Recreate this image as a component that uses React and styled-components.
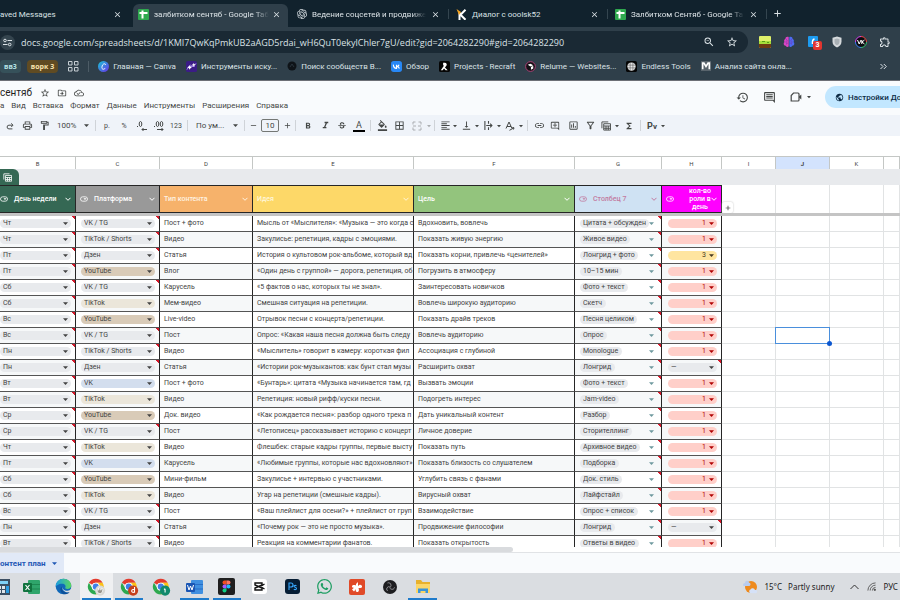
import React, { useState } from 'react'
import styled, { createGlobalStyle, css } from 'styled-components'
import {
  MdAdd,
  MdBorderAll,
  MdClose,
  MdFormatAlignLeft,
  MdFormatBold,
  MdFormatColorFill,
  MdFormatItalic,
  MdFunctions,
  MdHistory,
  MdLink,
  MdOutlineAddComment,
  MdOutlineCloudDone,
  MdOutlineComment,
  MdOutlineDriveFileMove,
  MdOutlineExtension,
  MdOutlineFilterAlt,
  MdOutlineFormatPaint,
  MdOutlineInsertChart,
  MdOutlinePrint,
  MdOutlineZoomOut,
  MdPublic,
  MdRemove,
  MdStarBorder,
  MdStrikethroughS,
  MdVerticalAlignBottom
} from 'react-icons/md'
import { FaWhatsapp } from 'react-icons/fa'
import { SiOpenai } from 'react-icons/si'

const GlobalStyle = createGlobalStyle`
  * {
    box-sizing: border-box;
  }
  body {
    margin: 0;
    background: #fff;
    font-family: Roboto, 'Liberation Sans', sans-serif;
  }
  button, input, select {
    font: inherit;
    color: inherit;
    border: 0;
    padding: 0;
    margin: 0;
    background: none;
    appearance: none;
    outline: 0;
  }
  a {
    color: inherit;
    text-decoration: none;
  }
  svg {
    display: block;
    flex: none;
  }
`

const systemFont = "'Open Sans', 'Noto Sans', sans-serif"

const Page = styled.div`
  display: flex;
  flex-direction: column;
  height: 100vh;
  overflow: hidden;
`

/* ---------- browser ---------- */

const Browser = styled.header`
  background: #2f3f4a;
  color: #dbe2e6;
  font-size: 8px;
  border-bottom: 1px solid #6d6f76;
`
const TabStrip = styled.div`
  display: flex;
  align-items: flex-end;
  height: 27px;
  background: #11222d;
`
const BrowserTab = styled.div`
  position: relative;
  display: flex;
  align-items: center;
  flex: 0 1 ${p => p.$first ? '131px' : '159px'};
  min-width: 0;
  height: 23px;
  padding: 0 9px 3px ${p => p.$first ? '0' : '7px'};
  gap: 5px;
  ${p => p.$line && css`
    &::after {
      content: '';
      position: absolute;
      right: 0;
      top: 5px;
      width: 1px;
      height: 10px;
      background: #34454f;
    }
  `}
  ${p => p.$active && css`
    &::before {
      content: '';
      position: absolute;
      z-index: 0;
      inset: 0 2px;
      border-radius: 6px 6px 0 0;
      background: #2f3f4a;
    }
  `}
`
const TabTitle = styled.button`
  position: relative;
  display: flex;
  align-items: center;
  flex: 1;
  min-width: 0;
  gap: 5px;
  text-align: left;
`
const Fade = styled.span`
  flex: 1;
  white-space: nowrap;
  mask-image: ${p => p.$fade ? 'linear-gradient(to left, transparent, #000 14px)' : 'none'};
`
const CloseButton = styled.button`
  position: relative;
  display: flex;
  justify-content: center;
  width: 9px;
`
const NewTab = styled.button`
  padding: 0 0 8px 5px;
`
const AddressRow = styled.div`
  display: flex;
  align-items: center;
  height: 30px;
  padding-right: 9px;
`
const Omnibox = styled.label`
  display: flex;
  align-items: center;
  flex: 1;
  height: 22px;
  margin-right: 11px;
  padding: 0 10px 0 0;
  gap: 11px;
  border-radius: 0 11px 11px 0;
  background: #1a2934;
`
const SiteInfo = styled.span`
  display: flex;
  align-items: center;
  justify-content: center;
  width: 15px;
  height: 15px;
  border-radius: 8px;
  background: #34444e;
`
const UrlInput = styled.input`
  flex: 1;
  min-width: 0;
  margin-left: -5px;
  font-family: ${systemFont};
  font-size: 9px;
`
const Extensions = styled.div`
  display: flex;
  gap: 12px;
`
const ExtensionButton = styled.button`
  position: relative;
  width: 12px;
  height: 12px;
`
const Badge = styled.span`
  position: absolute;
  left: 6px;
  top: 5px;
  width: 9px;
  height: 9px;
  border-radius: 2px;
  background: #e2352f;
  color: #fff;
  font-size: 7px;
  line-height: 9px;
  font-weight: 700;
`
const Bookmarks = styled.nav`
  display: flex;
  align-items: center;
  height: 23px;
  padding-bottom: 5px;
  white-space: nowrap;
  overflow: hidden;
`
const GroupChip = styled.button`
  height: 13px;
  padding: 0 4px;
  margin-right: 6px;
  border-radius: 4px;
  font-family: ${systemFont};
  font-weight: 700;
  font-size: 7px;
  background: ${p => p.$bg};
  color: ${p => p.$color};
`
const AllTabs = styled.button`
  margin-left: 4px;
`
const BookmarkLine = styled.span`
  width: 1px;
  height: 11px;
  margin: 0 9px;
  background: #4d5c66;
`
const Bookmark = styled.a`
  display: flex;
  align-items: center;
  gap: 4px;
  margin-right: 10px;
`
const MoreBookmarks = styled.button`
  margin-left: auto;
  margin-right: 13px;
`

/* ---------- document header ---------- */

const DocHeader = styled.div`
  display: flex;
  align-items: flex-start;
  height: 34px;
  background: #f9fbfd;
  color: #444746;
`
const DocInfo = styled.div`
  flex: 1;
`
const TitleRow = styled.div`
  display: flex;
  align-items: center;
  height: 18px;
  padding-top: 6px;
  gap: 7px;
`
const DocTitle = styled.h1`
  margin: 0 1px 0 0;
  font-size: 10px;
  line-height: 12px;
  font-weight: 400;
  color: #1f1f1f;
`
const MenuBar = styled.nav`
  display: flex;
  gap: 7px;
  font-size: 8px;
  line-height: 14px;
`
const HeaderActions = styled.div`
  display: flex;
  align-items: center;
  height: 22px;
  margin-top: 5px;
  gap: 14px;
`
const VideoButton = styled.button`
  display: flex;
  align-items: center;
  gap: 5px;
`
const ShareButton = styled.button`
  display: flex;
  align-items: center;
  gap: 4px;
  width: 75px;
  height: 22px;
  padding-left: 10px;
  border-radius: 11px 0 0 11px;
  overflow: hidden;
  background: #c2e7ff;
  color: #0b2a45;
  font-size: 8px;
  font-weight: 500;
  white-space: nowrap;
`

/* ---------- formatting toolbar ---------- */

const Toolbar = styled.div`
  display: flex;
  align-items: center;
  height: 21px;
  padding-left: 2px;
  background: #eff3f9;
  color: #444746;
  font-size: 7px;
`
const Tool = styled.button`
  display: flex;
  align-items: center;
  justify-content: center;
  width: ${p => p.$w || 18}px;
  height: 16px;
  opacity: ${p => p.$faint ? 0.4 : 1};
`
const ToolLine = styled.span`
  width: 1px;
  height: 11px;
  margin: 0 ${p => p.$wide ? 4 : 3}px 0 ${p => p.$wide ? 3 : 2}px;
  background: #cfd3d8;
`
const ToolSelect = styled.label`
  display: flex;
  align-items: center;
  justify-content: space-between;
  width: ${p => p.$w}px;
  padding: 0 4px 0 5px;
  font-size: 8px;
`
const SizeInput = styled.input`
  width: 18px;
  height: 13px;
  margin: 0 3px;
  border: 1px solid #747775;
  border-radius: 2px;
  text-align: center;
  font-size: 8px;
`
const TextColor = styled.span`
  width: 12px;
  border-bottom: 2px solid #000;
  font-size: 9px;
  line-height: 10px;
`
const Smart = styled.b`
  font-size: 9px;
  small {
    font-size: 8px;
  }
`
const FormulaBar = styled.div`
  height: 20px;
`

/* ---------- sheet ---------- */

const SheetArea = styled.main`
  flex: 1;
  min-height: 0;
  overflow: hidden;
`
const SheetTable = styled.table`
  width: 100%;
  table-layout: fixed;
  border-collapse: separate;
  border-spacing: 0;
  font-size: 7px;
  line-height: 9px;
  color: #434343;
`
const Letter = styled.th`
  height: 13px;
  padding: 0;
  border: solid #c4c7c5;
  border-width: 1px 1px 0 0;
  font-weight: ${p => p.$on ? 700 : 400};
  font-size: 6px;
  background: ${p => p.$on ? '#d3e3fd' : '#fff'};
`
const Band = styled.td`
  height: 16px;
  padding: 0;
  background: #e8eaed;
`
const TableTab = styled.button`
  display: flex;
  align-items: center;
  justify-content: center;
  width: 19px;
  height: 16px;
  padding-right: 4px;
  border-radius: 0 6px 0 0;
  background: #356854;
  color: #fff;
`
const HeadCell = styled.th`
  height: 28px;
  padding: 0 4px;
  &:first-child {
    padding-left: 0;
  }
  border: solid #262626;
  border-width: 1px 1px 1px 0;
  background: ${p => p.$bg};
  color: ${p => p.$color || '#fff'};
  font-weight: 500;
  line-height: ${p => p.$tall ? 8 : 9}px;
`
const HeadInner = styled.div`
  display: flex;
  align-items: center;
  gap: 6px;
  text-align: ${p => p.$center ? 'center' : 'left'};
  span {
    flex: 1;
    white-space: ${p => p.$center ? 'normal' : 'nowrap'};
    ${p => p.$center && 'padding-left: 6px; margin-right: -9px;'}
  }
`
const BlankHead = styled.td`
  position: relative;
  border-right: 1px solid #e1e3e4;
`
const AddColumn = styled.button`
  position: absolute;
  left: 0;
  bottom: 0;
  display: flex;
  align-items: center;
  justify-content: center;
  width: 11px;
  height: 11px;
  border-radius: 2px;
  background: #fff;
  color: #222;
  box-shadow: 0 0 2px #bbb;
`
const FreezeLine = styled.td`
  height: 3px;
  padding: 0;
  background: #c4c4c4;
`
const Row = styled.tr`
  height: 16px;
  background: ${p => p.$odd ? '#f6f8f9' : '#fff'};
`
const Cell = styled.td`
  height: 16px;
  padding: 0 4px;
  overflow: hidden;
  white-space: nowrap;
  border-right: 1px solid #262626;
  border-bottom: 1px solid #555;
  ${p => p.$flag && css`
    background: linear-gradient(to bottom left, #d5182a 50%, transparent 50%) top right / 4px 3px no-repeat;
  `}
`
const BlankCell = styled.td`
  height: 16px;
  padding: 0;
  background: #fff;
  border-right: 1px solid #e1e3e4;
  border-bottom: 1px solid #e1e3e4;
  ${p => p.$selected && css`
    position: relative;
    z-index: 1;
    &::before {
      content: '';
      position: absolute;
      inset: -1px;
      border: 1px solid #4a8fdc;
    }
    &::after {
      content: '';
      position: absolute;
      right: -3px;
      bottom: -3px;
      width: 5px;
      height: 5px;
      border-radius: 3px;
      background: #0b57d0;
    }
  `}
`
const Chip = styled.label`
  display: flex;
  align-items: center;
  justify-content: space-between;
  height: 9px;
  margin-left: ${p => p.$left}px;
  padding: 0 3px;
  border-radius: 5px;
  background: ${p => p.$bg};
  color: ${p => p.$color};
  select {
    flex: ${p => p.$hug ? '0 1 auto' : '1'};
    min-width: 0;
    height: 9px;
    line-height: 9px;
    text-align-last: ${p => p.$right ? 'right' : 'left'};
    ${p => p.$right && 'padding-right: 3px;'}
    ${p => p.$hug && css`
      max-width: 72px;
      margin-left: -3px;
      padding: 0 3px;
      border-radius: 5px;
      background: #e8eaed;
    `}
  }
`

/* ---------- bottom bars ---------- */

const ScrollTrack = styled.div`
  height: 6px;
  background: #fff;
  border-bottom: 1px solid #e1e3e6;
`
const ScrollThumb = styled.div`
  width: 57%;
  height: 5px;
  border-radius: 0 3px 3px 0;
  background: #d9dbde;
`
const SheetTabs = styled.footer`
  height: 20px;
  background: #f9fbfd;
`
const SheetTab = styled.button`
  display: flex;
  align-items: center;
  gap: 6px;
  width: 64px;
  height: 20px;
  background: #e1e9f7;
  color: #1f58b5;
  font-size: 8px;
  font-weight: 700;
  white-space: nowrap;
`
const Taskbar = styled.div`
  display: flex;
  align-items: center;
  height: 27px;
  padding-right: 2px;
  background: #dadde1;
  color: #222;
  font-family: 'Noto Sans', ${systemFont};
  font-size: 8px;
`
const Apps = styled.div`
  display: flex;
  flex: 0 1 439px;
  height: 27px;
`
const AppButton = styled.button`
  display: flex;
  align-items: center;
  justify-content: center;
  flex: ${p => p.$cut ? '0 0 15px' : '1 1 0'};
  min-width: 0;
  padding-right: ${p => p.$cut ? '10px' : '0'};
  overflow: hidden;
  background: ${p => p.$active ? '#eff0f2' : 'none'};
  border: solid transparent;
  border-width: 0 ${p => p.$cut ? 0 : 2}px;
  box-shadow: ${p => p.$running ? 'inset 0 -2px #1f7bcb' : 'none'};
`
const Tray = styled.div`
  display: flex;
  align-items: center;
  margin-left: auto;
  gap: 8px;
`
const Weather = styled.button`
  display: flex;
  align-items: center;
  gap: 6px;
  margin-right: 7px;
`

/* ---------- drawings ---------- */

const Caret = ({ size = 5, color = 'currentColor' }) => (
  <svg width={size} height={size} viewBox="0 0 6 6"><path d="M0 1.5h6L3 4.8z" fill={color} /></svg>
)
const SheetsLogo = () => (
  <svg width="11" height="11" viewBox="0 0 11 11">
    <rect width="11" height="11" rx="1" fill="#2fa84f" />
    <path d="M1.500 4h8M4.500 1.500v8" stroke="#fff" strokeWidth="2" />
  </svg>
)
const KLogo = () => (
  <svg width="11" height="11" viewBox="0 0 11 11">
    <path d="M3.500 3.500V11M9.500.8L4.500 5.800l5 5" stroke="#fff" strokeWidth="2" fill="none" />
    <path d="M.5 0L5 3 3 6z" fill="#f5a623" />
  </svg>
)
const Tune = () => (
  <svg width="9" height="9" viewBox="0 0 9 9" fill="none" stroke="#dbe2e6">
    <circle cx="2" cy="2.500" r="1.300" /><path d="M4.500 2.500H9M0 6.500h4.500" /><circle cx="6.700" cy="6.500" r="1.300" />
  </svg>
)
const Apps4 = () => (
  <svg width="11" height="11" viewBox="0 0 11 11" fill="none" stroke="#c6ced3">
    <path d="M.5.5h3.500v3.500H.5zM6.500.5H10v3.500H6.500zM.5 6.500h3.500V10H.5zM6.500 6.500H10V10H6.500z" />
  </svg>
)
const CanvaLogo = () => (
  <svg width="11" height="11" viewBox="0 0 12 12">
    <defs>
      <linearGradient id="canva" x1="0" y1="0" x2="1" y2="1">
        <stop offset="0" stopColor="#15c8d6" /><stop offset="1" stopColor="#6b2fe8" />
      </linearGradient>
    </defs>
    <circle cx="6" cy="6" r="6" fill="url(#canva)" />
    <path d="M8.300 4.200C8 2.600 6.300 2.700 5.200 4.100S3.800 8.600 5.300 9c1.100.2 2.100-.5 2.700-1.400" fill="none" stroke="#fff" />
  </svg>
)
const SparkLogo = () => (
  <svg width="11" height="11" viewBox="0 0 12 12">
    <rect width="12" height="12" rx="2" fill="#3b1c86" />
    <path d="M1 9.500Q4 3 6 5t5-2.500M2.500 6h7" stroke="#a58bea" fill="none" />
    <path d="M4 4.500l.8 1.700 1.700.8-1.700.8L4 9.500l-.8-1.700L1.500 7l1.700-.8zM8.500 2l.6 1.600 1.600.6-1.600.6-.6 1.600-.6-1.600-1.600-.6 1.600-.6z" fill="#fff" />
  </svg>
)
const DarkBlob = () => (
  <svg width="10" height="10" viewBox="0 0 10 10">
    <circle cx="5" cy="5" r="4.500" fill="#0e1318" /><path d="M3 6l2-3 2 3" stroke="#28333b" fill="none" />
  </svg>
)
const VkLogo = () => (
  <svg width="11" height="11" viewBox="0 0 12 12">
    <rect width="12" height="12" rx="3" fill="#2787f5" />
    <path d="M2.500 4c.2 2.600 1.300 4 3.500 4V4M6 6c1.300-.2 2.300-.8 2.800-2M6.200 5.900C7.600 6.100 8.700 6.900 9.200 8.100" stroke="#fff" strokeWidth="1.200" fill="none" />
  </svg>
)
const RecraftLogo = () => (
  <svg width="11" height="11" viewBox="0 0 12 12">
    <rect width="12" height="12" rx="2" fill="#050505" />
    <path d="M4.500 2h2a2 2 0 0 1 1.700 3L6.500 7 9.500 10H7.200L5.500 8.300 4 10H2l3.500-5H4.500z" fill="#fff" />
  </svg>
)
const RelumeLogo = () => (
  <svg width="11" height="11" viewBox="0 0 12 12">
    <circle cx="6" cy="6" r="5.300" fill="#121014" stroke="#b8437b" />
    <path d="M3 4l3-1 3 1.500L6 6zM6.500 6.500L9 5.300v3L6.500 9.500z" fill="#fff" />
  </svg>
)
const EndlessLogo = () => (
  <svg width="11" height="11" viewBox="0 0 12 12">
    <rect width="12" height="12" rx="2" fill="#050505" />
    <circle cx="6" cy="6" r="4.500" fill="#e6e6e6" />
    <path d="M1.500 4.500h9M1.500 7.500h9M4.500 1.500v9M7.500 1.500v9" stroke="#555" strokeWidth=".6" />
  </svg>
)
const MLogo = () => (
  <svg width="10" height="10" viewBox="0 0 12 12">
    <rect width="12" height="12" fill="#59646c" />
    <path d="M2 10V2.500h1.500L6 6.500l2.500-4H10V10" stroke="#fff" strokeWidth="2" fill="none" />
  </svg>
)
const PixelLand = () => (
  <svg width="12" height="12" viewBox="0 0 12 12">
    <rect width="12" height="12" rx="1" fill="#dff06a" /><path d="M0 5h12v3H0z" fill="#a6dd3a" />
    <path d="M0 8h12v3a1 1 0 0 1-1 1H1a1 1 0 0 1-1-1z" fill="#6e3b12" /><path d="M3 5h3v1H3zM8 6h2v1H8z" fill="#579c18" />
  </svg>
)
const Brain = () => (
  <svg width="12" height="12" viewBox="0 0 12 12">
    <path d="M5.700 1C3 .3 2.300 2 2.500 2.800 1 3.500.8 5 1.500 6-.2 7.500 1 9.800 2.700 9.700c.8 1.500 2.500 1.600 3 .6z" fill="#d946c4" />
    <path d="M6.300 1c2.700-.7 3.400 1 3.200 1.800C11 3.500 11.200 5 10.500 6c1.700 1.500.5 3.800-1.200 3.700-.8 1.500-2.500 1.600-3 .6z" fill="#4d6bf0" />
    <path d="M2.500 6h2M3 3.500l1.500 1M7.500 6h2M9 3.500l-1.500 1M3 8l1.500-.5M9 8l-1.500-.5" stroke="#7a2fb0" strokeWidth=".8" />
  </svg>
)
const BlueCard = () => (
  <svg width="12" height="12" viewBox="0 0 12 12">
    <rect x="1" width="10" height="11" rx="1" fill="#1d9bf0" /><path d="M7.500 3Q5 3.500 5.500 8" stroke="#fff" strokeWidth="1.500" fill="none" />
  </svg>
)
const Shield = () => (
  <svg width="12" height="12" viewBox="0 0 12 12">
    <path d="M6 .5l4.500 1.300v4C10.500 8.500 8.500 10.500 6 11.500 3.500 10.500 1.500 8.500 1.500 5.800v-4z" fill="#d5d9dc" />
    <path d="M6 2.500l2.500.7v2.600C8.500 7.500 7.500 8.700 6 9.300 4.500 8.700 3.500 7.500 3.500 5.800V3.200z" fill="#a9b0b5" />
  </svg>
)
const VkRing = () => (
  <svg width="12" height="12" viewBox="0 0 12 12">
    <circle cx="6" cy="6" r="5.500" fill="#0c0c10" />
    <path d="M6 .5A5.500 5.500 0 0 1 11.500 6" stroke="#e44" fill="none" />
    <path d="M11.500 6A5.500 5.500 0 0 1 6 11.500" stroke="#38c172" fill="none" />
    <path d="M6 11.500A5.500 5.500 0 0 1 .5 6" stroke="#3b82f6" fill="none" />
    <path d="M.5 6A5.500 5.500 0 0 1 6 .5" stroke="#d946ef" fill="none" />
    <path d="M2.500 4l1.700 4L6 4M6.800 4v4M9.500 4L7 6l2.500 2" stroke="#fff" fill="none" />
  </svg>
)
const RedoIcon = () => (
  <svg width="8" height="8" viewBox="0 0 10 10" fill="none" stroke="currentColor" strokeWidth="1.200">
    <path d="M8.500 4H3.700a2.300 2.300 0 0 0 0 4.600H8M6.500 1.700L8.800 4 6.500 6.300" />
  </svg>
)
const DecimalIcon = ({ more }) => (
  <svg width="12" height="12" viewBox="0 0 12 12" fill="none" stroke="currentColor">
    <path d="M1 6.500h1" />
    <ellipse cx="4.500" cy="4" rx="1.300" ry="2.500" />
    {more && <ellipse cx="8.500" cy="4" rx="1.300" ry="2.500" />}
    <path d={more ? 'M4 9.500h6M8.500 8l1.500 1.500L8.500 11' : 'M11 9.500H6M7.500 8L6 9.500 7.500 11'} />
  </svg>
)
const MergeIcon = () => (
  <svg width="10" height="10" viewBox="0 0 10 10" fill="none" stroke="currentColor">
    <path d="M3.500 1H1v2.500M6.500 1H9v2.500M3.500 9H1V6.500M6.500 9H9V6.500M1 5h3M9 5H6" />
  </svg>
)
const WrapIcon = () => (
  <svg width="9" height="9" viewBox="0 0 10 10" fill="none" stroke="currentColor" strokeWidth="1.200">
    <path d="M1 0v10M5 0v3M5 7v3M2.500 5h6M6.800 3l2 2-2 2" />
  </svg>
)
const RotateIcon = () => (
  <svg width="10" height="10" viewBox="0 0 10 10" fill="none" stroke="currentColor">
    <path d="M1 7.500L4 1l3 6.500M2 5.500h4M4.500 9.300L9 6.800M7.300 6.500L9 6.800 8.500 8.500" />
  </svg>
)
const TableViewIcon = ({ size = 10 }) => (
  <svg width={size} height={size} viewBox="0 0 11 11" fill="none" stroke="currentColor">
    <path d="M1 8V1h7M3 3h7.500v7H3zM3 5.500h7.500M5.500 5.500V10M8 5.500V10M3 8h7.500" />
  </svg>
)
const CameraIcon = () => (
  <svg width="12" height="12" viewBox="0 0 12 12" fill="none" stroke="#444746" strokeWidth="1.200">
    <path d="M3.500 2H8a1 1 0 0 1 1 1v6a1 1 0 0 1-1 1H1.200V4.500z" /><path d="M9 5.500l2.300-2v5L9 6.500z" fill="#444746" stroke="none" />
  </svg>
)
const ChipIcon = () => (
  <svg width="8" height="6" viewBox="0 0 8 6" fill="none" stroke="currentColor" strokeWidth=".8">
    <rect x=".5" y=".8" width="7" height="4.400" rx="2.200" /><path d="M3.500 2.300h3L5 4z" fill="currentColor" stroke="none" />
  </svg>
)
const Chevron = () => (
  <svg width="6" height="6" viewBox="0 0 6 6" fill="none" stroke="currentColor"><path d="M.5 1.800L3 4.300l2.500-2.500" /></svg>
)
const Doc = ({ color, dark, letter }) => (
  <svg width="17" height="16" viewBox="0 0 17 16">
    <rect x="5" y="1" width="12" height="14" rx="1" fill={color} />
    <path d="M5 5.500h12M5 10h12" stroke={dark} strokeWidth=".6" />
    <rect y="4" width="9" height="9" rx="1" fill={dark} />
    {letter === 'x' && <path d="M2.500 6l4 5M6.500 6l-4 5" stroke="#fff" strokeWidth="1.200" />}
    {letter === 'w' && <path d="M1.500 6l1.500 5 1.500-4L6 11l1.500-5" stroke="#fff" fill="none" />}
  </svg>
)
const EdgeLogo = () => (
  <svg width="17" height="17" viewBox="0 0 24 24">
    <defs>
      <linearGradient id="edge" x1="0" y1="0" x2="1" y2="0">
        <stop offset="0" stopColor="#1b9de2" /><stop offset="1" stopColor="#5bd65e" />
      </linearGradient>
    </defs>
    <circle cx="12" cy="12" r="11" fill="#1068b8" />
    <path d="M1 12C1 5.500 6 1 12 1s11 4.500 11 9.500c0 3-2.300 5-5.500 5-2.500 0-3.500-1-3-2 .9-1.500.6-5.500-4.500-5.500C5 8 1.500 11 1 12z" fill="url(#edge)" />
    <path d="M10 12c-1.500 4 2 9 7 8.300 2-.3 3.500-1.200 4.300-2-1 3-4.500 5.200-8 4.700C8.500 22.500 5 15 10 12z" fill="#0c4f99" />
    <path d="M10.500 11.500c-1 3.500 3 7 7.500 6.500 2-.3 3.300-1 4.500-2.500l1.500 3-4 1.500c-5 1-11-3-9.500-8.500z" fill="#dadde1" />
  </svg>
)
const ChromeLogo = ({ badge }) => (
  <svg width="19" height="18" viewBox="0 0 26 25">
    <path d="M12 1a11 11 0 0 1 9.530 5.500H12A5.500 5.500 0 0 0 7.240 9.250L2.470 6.500A11 11 0 0 1 12 1z" fill="#e33b2e" />
    <path d="M21.530 6.500A11 11 0 0 1 12 23l4.760-8.250A5.500 5.500 0 0 0 12 6.500z" fill="#fbc116" />
    <path d="M2.470 6.500A11 11 0 0 0 12 23l4.760-8.250a5.500 5.500 0 0 1-9.520 0z" fill="#2da94f" />
    <circle cx="12" cy="12" r="5.500" fill="#fff" /><circle cx="12" cy="12" r="4.200" fill="#3f7fe8" />
    {badge && <circle cx="18" cy="17.500" r="7" fill={badge} />}
    {badge === '#c5401d' && <path d="M20 12.500v8M20 18.500a2 2 0 1 1 0-1" stroke="#fff" strokeWidth="1.500" fill="none" />}
    {badge === '#10896c' && <path d="M18 15v5M16.500 16l1.500-1" stroke="#fff" strokeWidth="1.500" fill="none" />}
    {badge === '#d9d9d5' && <path d="M14 20v-4l2-2v3l1-4 2 1v3l1-3 2 1-1 5-3 2z" fill="#98948b" stroke="#fff" />}
  </svg>
)
const CalcLogo = () => (
  <svg width="16" height="16" viewBox="0 0 16 16">
    <rect x="1" width="14" height="16" fill="#3c4f63" /><path d="M3 2h10v3H3z" fill="#7fd0f5" />
    <path d="M3 7h3v3H3zM3 11h3v3H3zM7 7h3v3H7zM7 11h3v3H7z" fill="#dfe5ea" /><path d="M11 7h3v7h-3z" fill="#2b9be0" />
  </svg>
)
const FigmaLogo = () => (
  <svg width="17" height="17" viewBox="0 0 17 17">
    <rect width="17" height="17" rx="2" fill="#1f1f1f" />
    <path d="M8.500 2.500v4h-2a2 2 0 0 1 0-4z" fill="#f24e1e" /><path d="M8.500 2.500h2a2 2 0 0 1 0 4h-2z" fill="#ff7262" />
    <path d="M8.500 6.500v4h-2a2 2 0 0 1 0-4z" fill="#a259ff" /><circle cx="10.500" cy="8.500" r="2" fill="#1abcfe" />
    <path d="M8.500 10.500v2a2 2 0 1 1-2-2z" fill="#0acf83" />
  </svg>
)
const CapCutLogo = () => (
  <svg width="15" height="15" viewBox="0 0 15 15">
    <rect width="15" height="15" rx="3" fill="#fff" />
    <path d="M12.500 5L10 6.500V4H3v2l7 3v2H3V9l7-3M10 8.500l2.500 1.500" stroke="#111" strokeWidth="1.400" fill="none" />
  </svg>
)
const PsLogo = () => (
  <svg width="15" height="15" viewBox="0 0 15 15">
    <rect width="15" height="15" rx="3" fill="#061d34" />
    <path d="M4 11V4h2a2 2 0 0 1 0 4H4M11.500 6.700C10 6 9 6.500 9 7.300c0 1.200 2.500.8 2.500 2.200 0 1.100-1.500 1.400-2.700.8" stroke="#37a8ff" strokeWidth="1.100" fill="none" />
  </svg>
)
const RedLogo = () => (
  <svg width="16" height="16" viewBox="0 0 16 16">
    <rect width="16" height="16" rx="2" fill="#e04a28" />
    <path d="M9 3v4l1-.8c1.500-1 3.500.3 3 1.800-.3 1-1.500 1.300-3.500 1 .8 2 .5 3.500-.8 4-1.500.5-2.500-1-1.700-3L5 12.500 3 10.500l2-1.700c-1.300.2-2.200-.5-2-1.500.3-1.300 2-1.600 4-.8V5z" fill="#fff" />
  </svg>
)
const ObsLogo = () => (
  <svg width="14" height="14" viewBox="0 0 14 14">
    <circle cx="7" cy="7" r="7" fill="#1d1d20" />
    <path d="M4.500 3C6 2.300 8 3 8 5.500 8 6.500 7.500 7 7 7.200M11.500 7.300c-.2 1.700-2 2.700-3.800 1.600-.8-.5-1-1.200-.8-1.700M4.800 11C3.300 10 3.200 8 5 6.900c.8-.5 1.500-.3 1.900.2" stroke="#a5a5a9" strokeWidth=".8" fill="none" />
  </svg>
)
const FolderLogo = () => (
  <svg width="16" height="15" viewBox="0 0 16 15">
    <path d="M1 1h5l1.500 2H15v10H1z" fill="#e8b12c" /><path d="M1 5h14v9H1z" fill="#fcd667" />
    <path d="M3 14V9.500h10V14h-2.500v-2h-5v2z" fill="#3a94d8" />
  </svg>
)
const WeatherLogo = () => (
  <svg width="16" height="16" viewBox="0 0 16 16">
    <circle cx="9" cy="8" r="6" fill="#ee8a1d" />
    <path d="M1 6a2 2 0 0 1 2-2 2 2 0 0 1 4-.5A1.500 1.500 0 0 1 6.500 7H2a1 1 0 0 1-1-1z" fill="#b9cdf0" />
    <path d="M8 14a2 2 0 0 1 .5-3.500 2.500 2.500 0 0 1 4.500.5 1.600 1.600 0 0 1 1 3.200z" fill="#d5e1f7" />
  </svg>
)
const WifiIcon = () => (
  <svg width="9" height="9" viewBox="0 0 10 10" fill="none" stroke="#555">
    <path d="M1 9.500A8.500 8.500 0 0 1 9.500 1M3.500 9.500a6 6 0 0 1 6-6M6 9.500A3.500 3.500 0 0 1 9.500 6" /><circle cx="8.700" cy="8.700" r=".8" fill="#222" />
  </svg>
)

/* ---------- data ---------- */

const bookmarks = [
  { icon: <CanvaLogo />, text: 'Главная — Canva' },
  { icon: <SparkLogo />, text: 'Инструменты иску...' },
  { icon: <DarkBlob />, text: 'Поиск сообществ В...' },
  { icon: <VkLogo />, text: 'Обзор' },
  { icon: <RecraftLogo />, text: 'Projects - Recraft' },
  { icon: <RelumeLogo />, text: 'Relume — Websites...' },
  { icon: <EndlessLogo />, text: 'Endless Tools' },
  { icon: <MLogo />, text: 'Анализ сайта онла...' }
]

const menus = ['а', 'Вид', 'Вставка', 'Формат', 'Данные', 'Инструменты', 'Расширения', 'Справка']

const columns = [
  ['B', 76], ['C', 84], ['D', 93], ['E', 161], ['F', 161], ['G', 87], ['H', 60], ['I', 54], ['J', 54], ['K', 54], ['', null]
]

const heads = [
  { text: 'День недели', bg: '#356854', chip: true },
  { text: 'Платформа', bg: '#999999', chip: true },
  { text: 'Тип контента', bg: '#f6b26b', color: '#fff3e2' },
  { text: 'Идея', bg: '#fdd868', color: '#fff6d8' },
  { text: 'Цель', bg: '#93c47d' },
  { text: 'Столбец 7', bg: '#cfe2f3', color: '#c27ba0', chip: true },
  { text: 'кол-во роли в день', bg: '#ff00ff', chip: true, center: true }
]

const rows = [
  ['Чт', 'VK / TG', 'Пост + фото', 'Мысль от «Мыслителя»: «Музыка — это когда с', 'Вдохновить, вовлечь', 'Цитата + обсуждени', '1'],
  ['Чт', 'TikTok / Shorts', 'Видео', 'Закулисье: репетиция, кадры с эмоциями.', 'Показать живую энергию', 'Живое видео', '1'],
  ['Пт', 'Дзен', 'Статья', 'История о культовом рок-альбоме, который вд', 'Показать корни, привлечь «ценителей»', 'Лонгрид + фото', '3'],
  ['Пт', 'YouTube', 'Влог', '«Один день с группой» — дорога, репетиция, об', 'Погрузить в атмосферу', '10–15 мин', '1'],
  ['Сб', 'VK / TG', 'Карусель', '«5 фактов о нас, которых ты не знал».', 'Заинтересовать новичков', 'Фото + текст', '1'],
  ['Сб', 'TikTok', 'Мем-видео', 'Смешная ситуация на репетиции.', 'Вовлечь широкую аудиторию', 'Скетч', '1'],
  ['Вс', 'YouTube', 'Live-video', 'Отрывок песни с концерта/репетиции.', 'Показать драйв треков', 'Песня целиком', '1'],
  ['Вс', 'VK / TG', 'Пост', 'Опрос: «Какая наша песня должна быть следу', 'Вовлечь аудиторию', 'Опрос', '1'],
  ['Пн', 'TikTok / Shorts', 'Видео', '«Мыслитель» говорит в камеру: короткая фил', 'Ассоциация с глубиной', 'Monologue', '1'],
  ['Пн', 'Дзен', 'Статья', '«Истории рок-музыкантов: как бунт стал музы', 'Расширить охват', 'Лонгрид', '—'],
  ['Вт', 'VK', 'Пост + фото', '«Бунтарь»: цитата «Музыка начинается там, гд', 'Вызвать эмоции', 'Фото + текст', '1'],
  ['Вт', 'TikTok', 'Видео', 'Репетиция: новый рифф/куски песни.', 'Подогреть интерес', 'Jam-video', '1'],
  ['Ср', 'YouTube', 'Док. видео', '«Как рождается песня»: разбор одного трека п', 'Дать уникальный контент', 'Разбор', '1'],
  ['Ср', 'VK / TG', 'Пост', '«Летописец» рассказывает историю с концерт', 'Личное доверие', 'Сторителлинг', '1'],
  ['Чт', 'TikTok', 'Видео', 'Флешбек: старые кадры группы, первые высту', 'Показать путь', 'Архивное видео', '1'],
  ['Пт', 'VK', 'Карусель', '«Любимые группы, которые нас вдохновляют»', 'Показать близость со слушателем', 'Подборка', '1'],
  ['Сб', 'YouTube', 'Мини-фильм', 'Закулисье + интервью с участниками.', 'Углубить связь с фанами', 'Док. стиль', '1'],
  ['Сб', 'TikTok', 'Видео', 'Угар на репетиции (смешные кадры).', 'Вирусный охват', 'Лайфстайл', '1'],
  ['Вс', 'VK / TG', 'Пост', '«Ваш плейлист для осени?» + плейлист от груп', 'Взаимодействие', 'Опрос + список', '1'],
  ['Пн', 'Дзен', 'Статья', '«Почему рок — это не просто музыка».', 'Продвижение философии', 'Лонгрид', '—'],
  ['Вт', 'TikTok / Shorts', 'Видео', 'Реакция на комментарии фанатов.', 'Показать открытость', 'Ответы в видео', '1']
]

const platformColors = { YouTube: '#d9cbb8', TikTok: '#ebe6da', VK: '#d3deee' }
const countColors = {
  1: { bg: '#ffcfc9', color: '#b10202' },
  3: { bg: '#ffe5a0', color: '#473821' },
  '—': { bg: '#e8eaed', color: '#434343' }
}

const taskApps = [
  { name: 'Calculator', icon: <CalcLogo />, cut: true },
  { name: 'Excel', icon: <Doc color="#2fa56b" dark="#11733f" letter="x" /> },
  { name: 'Edge', icon: <EdgeLogo /> },
  { name: 'Chrome 1', icon: <ChromeLogo badge="#d9d9d5" />, running: true, active: true },
  { name: 'Chrome 2', icon: <ChromeLogo badge="#c5401d" />, running: true },
  { name: 'Chrome 3', icon: <ChromeLogo badge="#10896c" /> },
  { name: 'Word', icon: <Doc color="#3f8fe0" dark="#1a56b4" letter="w" />, running: true },
  { name: 'Figma', icon: <FigmaLogo />, running: true },
  { name: 'CapCut', icon: <CapCutLogo /> },
  { name: 'Photoshop', icon: <PsLogo /> },
  { name: 'WhatsApp', icon: <FaWhatsapp size={17} color="#1f9e63" /> },
  { name: 'Launcher', icon: <RedLogo /> },
  { name: 'OBS', icon: <ObsLogo /> },
  { name: 'Explorer', icon: <FolderLogo />, running: true }
]

/* ---------- parts ---------- */

function ChromeTab ({ title, icon, active, line, first, fade }) {
  return (
    <BrowserTab $active={active} $line={line} $first={first}>
      <TabTitle>{icon}<Fade $fade={fade}>{title}</Fade></TabTitle>
      <CloseButton aria-label="Закрыть вкладку"><MdClose size={9} /></CloseButton>
    </BrowserTab>
  )
}

function SelectChip ({ label, value, arrow, ...rest }) {
  return (
    <Chip {...rest}>
      <select aria-label={label} defaultValue={value}><option>{value}</option></select>
      <Caret color={arrow} />
    </Chip>
  )
}

function BrowserHeader () {
  const [url, setUrl] = useState('docs.google.com/spreadsheets/d/1KMI7QwKqPmkUB2aAGD5rdai_wH6QuT0ekylChler7gU/edit?gid=2064282290#gid=2064282290')
  return (
    <Browser>
      <TabStrip>
        <ChromeTab first title="aved Messages" />
        <ChromeTab active fade icon={<SheetsLogo />} title="залбитком сентяб - Google Таб" />
        <ChromeTab line fade icon={<SiOpenai size={10} />} title="Ведение соцсетей и продвиже" />
        <ChromeTab line icon={<KLogo />} title="Диалог с ooolsk52" />
        <ChromeTab line fade icon={<SheetsLogo />} title="Залбитком Сентяб - Google Та" />
        <NewTab aria-label="Новая вкладка"><MdAdd size={11} /></NewTab>
      </TabStrip>
      <AddressRow>
        <Omnibox>
          <SiteInfo><Tune /></SiteInfo>
          <UrlInput aria-label="Адрес" value={url} onChange={e => setUrl(e.target.value)} />
          <MdOutlineZoomOut size={12} />
          <MdStarBorder size={12} />
        </Omnibox>
        <Extensions>
          <ExtensionButton aria-label="Pixel"><PixelLand /></ExtensionButton>
          <ExtensionButton aria-label="Brain"><Brain /></ExtensionButton>
          <ExtensionButton aria-label="Card"><BlueCard /><Badge>3</Badge></ExtensionButton>
          <ExtensionButton aria-label="Shield"><Shield /></ExtensionButton>
          <ExtensionButton aria-label="VK"><VkRing /></ExtensionButton>
          <ExtensionButton aria-label="Расширения"><MdOutlineExtension size={12} /></ExtensionButton>
        </Extensions>
      </AddressRow>
      <Bookmarks>
        <GroupChip $bg="#36515a" $color="#b5e3e6">вв3</GroupChip>
        <GroupChip $bg="#604b22" $color="#f8e3b0">ворк 3</GroupChip>
        <AllTabs aria-label="Приложения"><Apps4 /></AllTabs>
        <BookmarkLine />
        {bookmarks.map(b => <Bookmark href="#" key={b.text}>{b.icon}{b.text}</Bookmark>)}
        <MoreBookmarks aria-label="Другие закладки">
          <svg width="7" height="7" viewBox="0 0 7 7" fill="none" stroke="currentColor"><path d="M.5 1L3 3.500.5 6M3.800 1l2.500 2.500L3.800 6" /></svg>
        </MoreBookmarks>
      </Bookmarks>
    </Browser>
  )
}

function FormatToolbar () {
  return (
    <Toolbar>
      <Tool $w={16} aria-label="Повторить"><RedoIcon /></Tool>
      <Tool aria-label="Печать"><MdOutlinePrint size={11} /></Tool>
      <Tool $w={16} aria-label="Формат"><MdOutlineFormatPaint size={11} /></Tool>
      <ToolSelect $w={41}>
        <select aria-label="Масштаб"><option>100%</option></select><Caret />
      </ToolSelect>
      <ToolLine />
      <Tool $w={16}>р.</Tool>
      <Tool>%</Tool>
      <Tool aria-label="Меньше знаков"><DecimalIcon /></Tool>
      <Tool $w={16} aria-label="Больше знаков"><DecimalIcon more /></Tool>
      <Tool>123</Tool>
      <ToolLine />
      <ToolSelect $w={51}>
        <select aria-label="Шрифт"><option>По ум...</option></select><Caret />
      </ToolSelect>
      <ToolLine />
      <Tool $w={10} aria-label="Меньше"><MdRemove size={9} /></Tool>
      <SizeInput aria-label="Размер шрифта" defaultValue="10" />
      <Tool $w={10} aria-label="Больше"><MdAdd size={9} /></Tool>
      <ToolLine $wide />
      <Tool $w={16} aria-label="Полужирный"><MdFormatBold size={10} /></Tool>
      <Tool aria-label="Курсив"><MdFormatItalic size={11} /></Tool>
      <Tool $w={16} aria-label="Зачеркнутый"><MdStrikethroughS size={10} /></Tool>
      <Tool><TextColor>A</TextColor></Tool>
      <ToolLine />
      <Tool $w={16} aria-label="Заливка"><MdFormatColorFill size={11} color="#444746" /></Tool>
      <Tool aria-label="Границы"><MdBorderAll size={11} /></Tool>
      <Tool $faint aria-label="Объединить"><MergeIcon /></Tool>
      <Tool $w={6} $faint aria-label="Варианты объединения"><Caret size={4} /></Tool>
      <ToolLine />
      <Tool $w={14} aria-label="По горизонтали"><MdFormatAlignLeft size={11} /></Tool>
      <Tool $w={6} aria-label="Варианты"><Caret size={4} /></Tool>
      <Tool $w={16} aria-label="По вертикали"><MdVerticalAlignBottom size={11} /></Tool>
      <Tool $w={6} aria-label="Варианты"><Caret size={4} /></Tool>
      <Tool $w={16} aria-label="Перенос"><WrapIcon /></Tool>
      <Tool $w={6} aria-label="Варианты"><Caret size={4} /></Tool>
      <Tool $w={16} aria-label="Поворот"><RotateIcon /></Tool>
      <Tool $w={6} aria-label="Варианты"><Caret size={4} /></Tool>
      <ToolLine $wide />
      <Tool $w={14} aria-label="Ссылка"><MdLink size={11} /></Tool>
      <Tool aria-label="Комментарий"><MdOutlineAddComment size={10} /></Tool>
      <Tool aria-label="Диаграмма"><MdOutlineInsertChart size={11} /></Tool>
      <Tool $w={16} aria-label="Фильтр"><MdOutlineFilterAlt size={11} /></Tool>
      <Tool $w={16} aria-label="Представления"><TableViewIcon /></Tool>
      <Tool $w={6} aria-label="Варианты"><Caret size={4} /></Tool>
      <Tool aria-label="Функции"><MdFunctions size={10} /></Tool>
      <ToolLine />
      <Tool $w={16}><Smart>P<small>v</small></Smart></Tool>
      <Tool $w={6} aria-label="Варианты"><Caret size={4} /></Tool>
    </Toolbar>
  )
}

function Sheet () {
  return (
    <SheetTable>
      <colgroup>
        {columns.map(([name, width]) => <col key={name} width={width || undefined} />)}
      </colgroup>
      <thead>
        <tr>{columns.map(([name]) => <Letter key={name} $on={name === 'J'}>{name}</Letter>)}</tr>
        <tr>
          <Band colSpan={11}><TableTab aria-label="Таблица"><TableViewIcon size={9} /></TableTab></Band>
        </tr>
        <tr>
          {heads.map(h => (
            <HeadCell key={h.text} $bg={h.bg} $color={h.color} $tall={h.center}>
              <HeadInner $center={h.center}>
                {h.chip && <ChipIcon />}
                <span>{h.text}</span>
                <Chevron />
              </HeadInner>
            </HeadCell>
          ))}
          <BlankHead><AddColumn aria-label="Добавить столбец"><MdAdd size={8} /></AddColumn></BlankHead>
          <BlankHead />
          <BlankHead />
          <BlankHead />
        </tr>
        <tr><FreezeLine colSpan={11} /></tr>
      </thead>
      <tbody>
        {rows.map(([day, platform, type, idea, goal, format, count], i) => (
          <Row key={i} $odd={i % 2 === 1}>
            <Cell $flag>
              <SelectChip label="День недели" value={day} $left={-4} $bg="#e8eaed" />
            </Cell>
            <Cell $flag={!platformColors[platform]}>
              <SelectChip label="Платформа" value={platform} $left={1} $bg={platformColors[platform] || '#e8eaed'} />
            </Cell>
            <Cell>{type}</Cell>
            <Cell>{idea}</Cell>
            <Cell>{goal}</Cell>
            <Cell $flag>
              <SelectChip label="Столбец 7" value={format} $left={1} $hug arrow="#6f9a9f" />
            </Cell>
            <Cell $flag={count === '—'}>
              <SelectChip
                label="кол-во"
                value={count}
                $left={2}
                $right={count !== '—'}
                $bg={countColors[count].bg}
                $color={countColors[count].color}
              />
            </Cell>
            <BlankCell />
            <BlankCell $selected={i === 7} />
            <BlankCell />
            <BlankCell />
          </Row>
        ))}
      </tbody>
    </SheetTable>
  )
}

function App () {
  return (
    <Page>
      <GlobalStyle />
      <BrowserHeader />
      <DocHeader>
        <DocInfo>
          <TitleRow>
            <DocTitle>сентяб</DocTitle>
            <MdStarBorder size={10} />
            <MdOutlineDriveFileMove size={10} />
            <MdOutlineCloudDone size={10} />
          </TitleRow>
          <MenuBar>{menus.map(m => <button key={m}>{m}</button>)}</MenuBar>
        </DocInfo>
        <HeaderActions>
          <button aria-label="История"><MdHistory size={13} /></button>
          <button aria-label="Комментарии"><MdOutlineComment size={13} /></button>
          <VideoButton aria-label="Видеовстреча"><CameraIcon /><Caret size={4} /></VideoButton>
          <ShareButton><MdPublic size={9} />Настройки До</ShareButton>
        </HeaderActions>
      </DocHeader>
      <FormatToolbar />
      <FormulaBar />
      <SheetArea><Sheet /></SheetArea>
      <ScrollTrack><ScrollThumb /></ScrollTrack>
      <SheetTabs>
        <SheetTab>онтент план <Caret /></SheetTab>
      </SheetTabs>
      <Taskbar>
        <Apps>
          {taskApps.map(a => (
            <AppButton key={a.name} aria-label={a.name} $cut={a.cut} $running={a.running} $active={a.active}>{a.icon}</AppButton>
          ))}
        </Apps>
        <Tray>
          <Weather><WeatherLogo /><span>15°C</span><span>Partly sunny</span></Weather>
          <svg width="9" height="6" viewBox="0 0 9 6" fill="none" stroke="#333"><path d="M.5 5l4-4 4 4" /></svg>
          <WifiIcon />
          <span>РУС</span>
        </Tray>
      </Taskbar>
    </Page>
  )
}

export default App
